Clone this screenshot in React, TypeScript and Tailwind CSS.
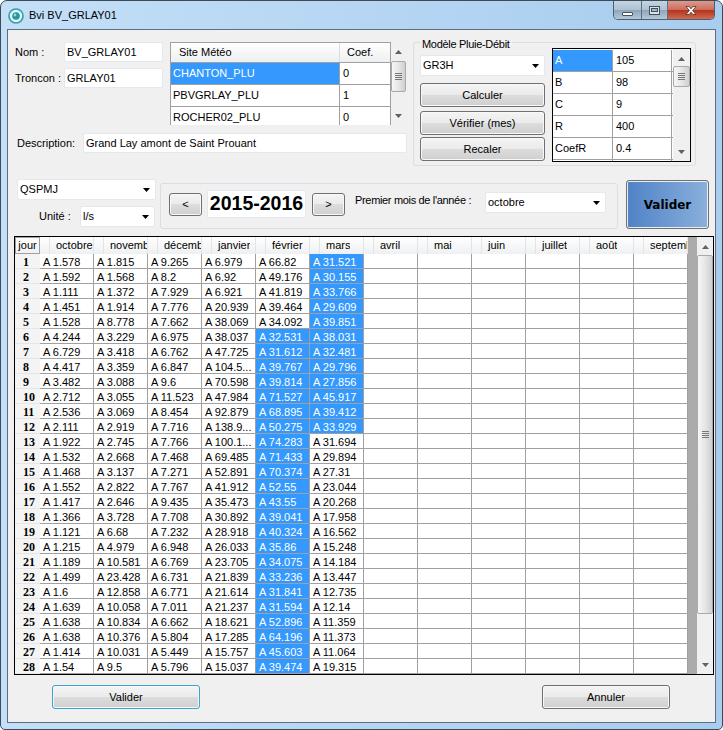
const MOIS = ["octobre", "novemb", "décemb", "janvier", "février", "mars", "avril", "mai", "juin", "juillet", "août", "septemb"]

const DATA = [
  ["A 1.578", "A 1.815", "A 9.265", "A 6.979", "A 66.82", "A 31.521"],
  ["A 1.592", "A 1.568", "A 8.2", "A 6.92", "A 49.176", "A 30.155"],
  ["A 1.111", "A 1.372", "A 7.929", "A 6.921", "A 41.819", "A 33.766"],
  ["A 1.451", "A 1.914", "A 7.776", "A 20.939", "A 39.464", "A 29.609"],
  ["A 1.528", "A 8.778", "A 7.662", "A 38.069", "A 34.092", "A 39.851"],
  ["A 4.244", "A 3.229", "A 6.975", "A 38.037", "A 32.531", "A 38.031"],
  ["A 6.729", "A 3.418", "A 6.762", "A 47.725", "A 31.612", "A 32.481"],
  ["A 4.417", "A 3.359", "A 6.847", "A 104.5...", "A 39.767", "A 29.796"],
  ["A 3.482", "A 3.088", "A 9.6", "A 70.598", "A 39.814", "A 27.856"],
  ["A 2.712", "A 3.055", "A 11.523", "A 47.984", "A 71.527", "A 45.917"],
  ["A 2.536", "A 3.069", "A 8.454", "A 92.879", "A 68.895", "A 39.412"],
  ["A 2.111", "A 2.919", "A 7.716", "A 138.9...", "A 50.275", "A 33.929"],
  ["A 1.922", "A 2.745", "A 7.766", "A 100.1...", "A 74.283", "A 31.694"],
  ["A 1.532", "A 2.668", "A 7.468", "A 69.485", "A 71.433", "A 29.894"],
  ["A 1.468", "A 3.137", "A 7.271", "A 52.891", "A 70.374", "A 27.31"],
  ["A 1.552", "A 2.822", "A 7.767", "A 41.912", "A 52.55", "A 23.044"],
  ["A 1.417", "A 2.646", "A 9.435", "A 35.473", "A 43.55", "A 20.268"],
  ["A 1.366", "A 3.728", "A 7.708", "A 30.892", "A 39.041", "A 17.958"],
  ["A 1.121", "A 6.68", "A 7.232", "A 28.918", "A 40.324", "A 16.562"],
  ["A 1.215", "A 4.979", "A 6.948", "A 26.033", "A 35.86", "A 15.248"],
  ["A 1.189", "A 10.581", "A 6.769", "A 23.705", "A 34.075", "A 14.184"],
  ["A 1.499", "A 23.428", "A 6.731", "A 21.839", "A 33.236", "A 13.447"],
  ["A 1.6", "A 12.858", "A 6.771", "A 21.614", "A 31.841", "A 12.735"],
  ["A 1.639", "A 10.058", "A 7.011", "A 21.237", "A 31.594", "A 12.14"],
  ["A 1.638", "A 10.834", "A 6.662", "A 18.621", "A 52.896", "A 11.359"],
  ["A 1.638", "A 10.376", "A 5.804", "A 17.285", "A 64.196", "A 11.373"],
  ["A 1.414", "A 10.031", "A 5.449", "A 15.757", "A 45.603", "A 11.064"],
  ["A 1.54", "A 9.5", "A 5.796", "A 15.037", "A 39.474", "A 19.315"],
]

const SITES = [
  ["CHANTON_PLU", "0"],
  ["PBVGRLAY_PLU", "1"],
  ["ROCHER02_PLU", "0"],
]

const PARAMS = [
  ["A", "105"],
  ["B", "98"],
  ["C", "9"],
  ["R", "400"],
  ["CoefR", "0.4"],
]

function isSelected(row: number, col: number) {
  if (col === 4) return row >= 5
  if (col === 5) return row <= 11
  return false
}

function Triangle({ down, className }: { down?: boolean; className?: string }) {
  return (
    <svg width="7" height="4" viewBox="0 0 7 4" className={className}>
      <path d={down ? "M0 0H7L3.5 4Z" : "M0 4H7L3.5 0Z"} fill="currentColor" />
    </svg>
  )
}

function ScrollBar({ width, before, thumb, after }: { width: string; before: string; thumb: string; after: string }) {
  return (
    <div className={`${width} shrink-0 h-full bg-[#f0f0f0] flex flex-col`}>
      <div className={`${before} flex justify-center pt-[8px] text-[#606060]`}>
        <Triangle />
      </div>
      <div className={`${thumb} border border-[#a9a9a9] rounded-[2px] bg-[linear-gradient(to_right,#f6f6f6,#e6e6e6_50%,#cfcfcf)] flex flex-col items-center justify-center gap-[1px]`}>
        <div className="w-[7px] h-[1px] bg-[#777777]" />
        <div className="w-[7px] h-[1px] bg-[#777777]" />
        <div className="w-[7px] h-[1px] bg-[#777777]" />
        <div className="w-[7px] h-[1px] bg-[#777777]" />
      </div>
      <div className={`${after} flex justify-center items-end pb-[7px] text-[#606060]`}>
        <Triangle down />
      </div>
    </div>
  )
}

function Combo({ value, className }: { value: string; className: string }) {
  return (
    <div className={`${className} h-[21px] bg-white border border-[#e3e9ef] rounded-[2px] flex items-center justify-between pl-[2px] pr-[5px]`}>
      <span>{value}</span>
      <Triangle down className="text-black" />
    </div>
  )
}

function TextBox({ value, className }: { value: string; className: string }) {
  return (
    <div className={`${className} h-[20px] bg-white border border-[#e3e9ef] rounded-[2px] flex items-center pl-[2px]`}>
      {value}
    </div>
  )
}

function Button({ label, className }: { label: string; className: string }) {
  return (
    <button className={`${className} border border-[#707070] rounded-[3px] text-[11px] text-black flex items-center justify-center bg-[linear-gradient(to_bottom,#f4f4f4,#ebebeb_48%,#dddddd_50%,#cfcfcf)] shadow-[inset_0_0_0_1px_#f8f8f8]`}>
      {label}
    </button>
  )
}

function TitleBar() {
  return (
    <div className="h-[28px] flex justify-between">
      <div className="flex items-center pl-[1px]">
        <svg width="16" height="16" viewBox="0 0 16 16" className="mt-[1px]">
          <circle cx="8" cy="8" r="7" fill="#e8f6f6" stroke="#2a9fa8" strokeWidth="1.6" />
          <circle cx="8" cy="8" r="3.8" fill="#1f97a4" />
          <circle cx="7" cy="7" r="1.4" fill="#8fd8de" />
        </svg>
        <span className="ml-[5px] mt-[1px] text-[11px] text-black">Bvi BV_GRLAY01</span>
      </div>
      <div className="flex h-[19px] mr-[1px] border-x border-b border-[#4f5f6d] rounded-b-[5px] overflow-hidden">
        <div className="w-[28px] flex items-end justify-center pb-[3px] border-r border-[#5f7080] bg-[linear-gradient(to_bottom,#c3d4e2,#aec2d3_48%,#8ea5b8_50%,#b4c8d8)]">
          <div className="w-[11px] h-[4px] bg-white border border-[#45525e] rounded-[1px]" />
        </div>
        <div className="w-[26px] flex items-center justify-center border-r border-[#5f7080] bg-[linear-gradient(to_bottom,#c3d4e2,#aec2d3_48%,#8ea5b8_50%,#b4c8d8)]">
          <div className="w-[11px] h-[9px] border border-[#45525e] bg-[#d8e2ea] flex items-center justify-center">
            <div className="w-[7px] h-[4px] border border-[#45525e] bg-[#a5b8c8]" />
          </div>
        </div>
        <div className="w-[46px] flex items-center justify-center bg-[linear-gradient(to_bottom,#dc9a8c,#cf6d5c_48%,#b5321c_50%,#cf6a52)]">
          <svg width="14" height="11" viewBox="0 0 14 11">
            <path d="M2 1.5H5L7 3.8L9 1.5H12L8.6 5.5L12 9.5H9L7 7.2L5 9.5H2L5.4 5.5Z" fill="#ffffff" stroke="#5a3a36" strokeWidth="0.9" />
          </svg>
        </div>
      </div>
    </div>
  )
}

function SiteTable() {
  return (
    <div className="w-[221px] h-[83px] overflow-hidden border-l border-t border-r border-[#a0a0a0] ml-[7px] bg-white">
      <div className="flex h-[20px] bg-[linear-gradient(to_bottom,#ffffff,#eeeff0)] border-b border-[#a0a0a0]">
        <div className="w-[169px] pl-[8px] flex items-center border-r border-[#dddddd]">Site Météo</div>
        <div className="flex-1 pl-[7px] flex items-center">Coef.</div>
      </div>
      {SITES.map((site, i) => (
        <div key={i} className="flex h-[22px] border-b border-[#a0a0a0]">
          <div className={`w-[169px] pl-[2px] flex items-center border-r border-[#a0a0a0] ${i === 0 ? "bg-[#3399ff] text-white" : ""}`}>
            {site[0]}
          </div>
          <div className="flex-1 pl-[3px] flex items-center">{site[1]}</div>
        </div>
      ))}
    </div>
  )
}

function ModeleGroup() {
  return (
    <div className="relative ml-[6px] w-[283px] h-[124px] border border-[#d5dfe5] rounded-[3px] pl-[6px] flex">
      <span className="absolute left-[6px] top-[-7px] px-[2px] bg-[#f0f0f0] tracking-[-0.3px]">Modèle Pluie-Débit</span>
      <div className="w-[125px] pt-[12px]">
        <Combo value="GR3H" className="w-[125px]" />
        <Button label="Calculer" className="w-[125px] h-[24px] mt-[7px]" />
        <Button label="Vérifier (mes)" className="w-[125px] h-[24px] mt-[4px]" />
        <Button label="Recaler" className="w-[125px] h-[24px] mt-[2px]" />
      </div>
      <div className="ml-[7px] mt-[5px] w-[139px] h-[114px] border border-black bg-white flex">
        <div className="w-[120px] pt-[1px]">
          {PARAMS.map((param, i) => (
            <div key={i} className="flex h-[22px] border-b border-[#a0a0a0]">
              <div className={`w-[60px] pl-[2px] flex items-center border-r border-[#a0a0a0] ${i === 0 ? "bg-[#3399ff] text-white" : ""}`}>
                {param[0]}
              </div>
              <div className="w-[59px] pl-[3px] flex items-center border-r border-[#a0a0a0]">{param[1]}</div>
            </div>
          ))}
          <div className="h-[1px] flex">
            <div className="w-[60px] border-r border-[#a0a0a0]" />
            <div className="w-[59px] border-r border-[#a0a0a0]" />
          </div>
        </div>
        <ScrollBar width="w-[17px]" before="h-[17px]" thumb="h-[21px]" after="flex-1" />
      </div>
    </div>
  )
}

function AnneeGroup() {
  return (
    <div className="ml-[4px] mt-[4px] w-[458px] h-[46px] border border-[#d5dfe5] rounded-[3px] pl-[8px] flex items-start">
      <Button label="<" className="w-[33px] h-[23px] mt-[9px]" />
      <div className="ml-[5px] mt-[6px] w-[99px] h-[28px] bg-white border border-[#e3e9ef] flex items-center justify-center font-bold text-[19.5px] text-black">
        2015-2016
      </div>
      <Button label=">" className="ml-[6px] w-[33px] h-[23px] mt-[9px]" />
      <span className="ml-[10px] mt-[8px] w-[130px] tracking-[-0.33px]">Premier mois de l'année :</span>
      <Combo value="octobre" className="mt-[8px] w-[121px]" />
    </div>
  )
}

function Grille() {
  return (
    <div className="ml-[6px] w-[700px] h-[439px] border border-black bg-white flex">
      <div className="w-[673px]">
        <div className="flex h-[17px] bg-[linear-gradient(to_bottom,#ffffff,#eef0f2)]">
          <div className="w-[25px] border border-[#a0a0a0] flex items-center justify-center">jour</div>
          {MOIS.map((mois) => (
            <div key={mois} className="w-[54px] flex border-r border-[#e2e4e6]">
              <div className="w-[10px] shrink-0 border-r border-[#e2e4e6]" />
              <div className="pl-[6px] overflow-hidden whitespace-nowrap flex items-center">{mois}</div>
            </div>
          ))}
        </div>
        {DATA.map((row, i) => (
          <div key={i} className="flex h-[15px]">
            <div className="w-[25px] bg-[#f4f4f4] border-b border-[#e6e6e6] pl-[8px] pt-[2px] font-['Liberation_Serif'] font-bold text-[12px] leading-[13px] text-black overflow-hidden">
              {i + 1}
            </div>
            {MOIS.map((mois, j) => (
              <div
                key={mois}
                className={`w-[54px] pl-[3px] border-r border-b border-[#a0a0a0] leading-[16px] overflow-hidden whitespace-nowrap ${isSelected(i, j) ? "bg-[#3399ff] text-white" : ""}`}
              >
                {row[j] ?? ""}
              </div>
            ))}
          </div>
        ))}
      </div>
      <div className="w-[9px] bg-[#ababab]" />
      <ScrollBar width="w-[16px]" before="h-[18px]" thumb="h-[359px]" after="flex-1" />
    </div>
  )
}

export default function App() {
  return (
    <div className="w-[723px] h-[730px] bg-white font-['Liberation_Sans',sans-serif] text-[11px] text-black">
      <div className="w-[723px] h-[730px] px-[6px] pb-[6px] border border-[#3e4a55] rounded-t-[7px] rounded-b-[5px] bg-[linear-gradient(to_right,#c4dff8,#b6d6f3_50%,#a9cdee)]">
        <TitleBar />
        <div className="w-[709px] h-[694px] border border-[#5f6f7f] bg-[#f0f0f0]">
          {/* TOP */}
          <div className="flex pl-[7px] pt-[12px] items-start">
            <div className="w-[392px]">
              <div className="flex">
                <div className="w-[148px]">
                  <div className="flex items-center">
                    <span className="w-[49px]">Nom :</span>
                    <TextBox value="BV_GRLAY01" className="w-[99px]" />
                  </div>
                  <div className="flex items-center mt-[6px]">
                    <span className="w-[49px]">Troncon :</span>
                    <TextBox value="GRLAY01" className="w-[99px]" />
                  </div>
                </div>
                <SiteTable />
                <div className="h-[83px]">
                  <ScrollBar width="w-[15px]" before="h-[19px]" thumb="h-[31px]" after="flex-1" />
                </div>
              </div>
              <div className="flex items-center mt-[8px] pl-[2px]">
                <span className="w-[66px]">Description:</span>
                <TextBox value="Grand Lay amont de Saint Prouant" className="w-[324px]" />
              </div>
            </div>
            <ModeleGroup />
          </div>

          {/* ANNEE */}
          <div className="flex pl-[9px] mt-[13px] items-start">
            <div className="w-[139px]">
              <Combo value="QSPMJ" className="w-[139px]" />
              <div className="flex items-center mt-[6px] pl-[22px]">
                <span className="w-[41px]">Unité :</span>
                <Combo value="l/s" className="w-[75px]" />
              </div>
            </div>
            <AnneeGroup />
            <button className="ml-[8px] mt-[1px] w-[83px] h-[49px] border border-[#707070] rounded-[3px] bg-[linear-gradient(to_right,#4f82c6,#8ab0dc)] shadow-[inset_0_0_0_1px_#e8eef5] font-['DejaVu_Sans'] font-bold text-[12px] text-black">
              Valider
            </button>
          </div>

          {/* GRILLE */}
          <div className="mt-[7px]">
            <Grille />
          </div>

          {/* BOUTONS */}
          <div className="flex mt-[10px] pl-[44px]">
            <Button label="Valider" className="w-[148px] h-[24px] !border-[#3ba3d0] shadow-[inset_0_0_0_1px_#bfe6f5]" />
            <Button label="Annuler" className="ml-[342px] w-[128px] h-[24px]" />
          </div>
        </div>
      </div>
    </div>
  )
}
